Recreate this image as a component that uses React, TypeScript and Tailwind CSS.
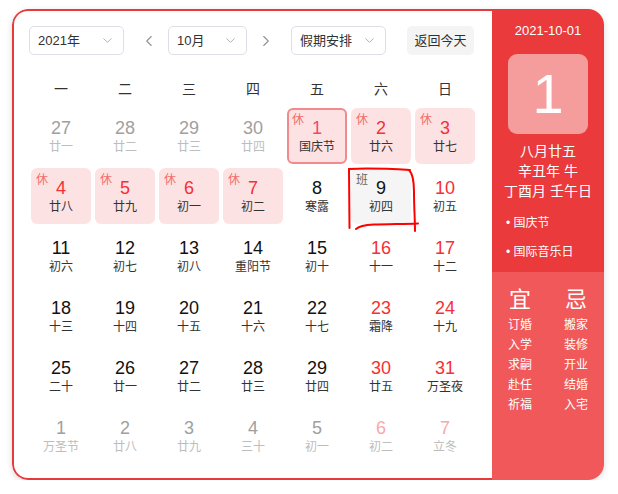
import { ChevronDown, ChevronLeft, ChevronRight } from "lucide-react";

type Cell = {
  day: number;
  lunar: string;
  kind: "prev" | "cur" | "next";
  red?: boolean;
  tag?: "休" | "班";
  selected?: boolean;
};

const cells: Cell[] = [
  { day: 27, lunar: "廿一", kind: "prev" },
  { day: 28, lunar: "廿二", kind: "prev" },
  { day: 29, lunar: "廿三", kind: "prev" },
  { day: 30, lunar: "廿四", kind: "prev" },
  { day: 1, lunar: "国庆节", kind: "cur", red: true, tag: "休", selected: true },
  { day: 2, lunar: "廿六", kind: "cur", red: true, tag: "休" },
  { day: 3, lunar: "廿七", kind: "cur", red: true, tag: "休" },
  { day: 4, lunar: "廿八", kind: "cur", red: true, tag: "休" },
  { day: 5, lunar: "廿九", kind: "cur", red: true, tag: "休" },
  { day: 6, lunar: "初一", kind: "cur", red: true, tag: "休" },
  { day: 7, lunar: "初二", kind: "cur", red: true, tag: "休" },
  { day: 8, lunar: "寒露", kind: "cur" },
  { day: 9, lunar: "初四", kind: "cur", tag: "班" },
  { day: 10, lunar: "初五", kind: "cur", red: true },
  { day: 11, lunar: "初六", kind: "cur" },
  { day: 12, lunar: "初七", kind: "cur" },
  { day: 13, lunar: "初八", kind: "cur" },
  { day: 14, lunar: "重阳节", kind: "cur" },
  { day: 15, lunar: "初十", kind: "cur" },
  { day: 16, lunar: "十一", kind: "cur", red: true },
  { day: 17, lunar: "十二", kind: "cur", red: true },
  { day: 18, lunar: "十三", kind: "cur" },
  { day: 19, lunar: "十四", kind: "cur" },
  { day: 20, lunar: "十五", kind: "cur" },
  { day: 21, lunar: "十六", kind: "cur" },
  { day: 22, lunar: "十七", kind: "cur" },
  { day: 23, lunar: "霜降", kind: "cur", red: true },
  { day: 24, lunar: "十九", kind: "cur", red: true },
  { day: 25, lunar: "二十", kind: "cur" },
  { day: 26, lunar: "廿一", kind: "cur" },
  { day: 27, lunar: "廿二", kind: "cur" },
  { day: 28, lunar: "廿三", kind: "cur" },
  { day: 29, lunar: "廿四", kind: "cur" },
  { day: 30, lunar: "廿五", kind: "cur", red: true },
  { day: 31, lunar: "万圣夜", kind: "cur", red: true },
  { day: 1, lunar: "万圣节", kind: "next" },
  { day: 2, lunar: "廿八", kind: "next" },
  { day: 3, lunar: "廿九", kind: "next" },
  { day: 4, lunar: "三十", kind: "next" },
  { day: 5, lunar: "初一", kind: "next" },
  { day: 6, lunar: "初二", kind: "next", red: true },
  { day: 7, lunar: "立冬", kind: "next", red: true },
];

const weekdays = ["一", "二", "三", "四", "五", "六", "日"];
const yi = ["订婚", "入学", "求嗣", "赴任", "祈福"];
const ji = ["搬家", "装修", "开业", "结婚", "入宅"];

function Select({ label, width }: { label: string; width: string }) {
  return (
    <div className={`${width} h-[29px] flex items-center justify-between pl-[8px] pr-[8px] border border-[#dcdfe6] rounded-[5px] text-[13px] text-[#303133]`}>
      <span>{label}</span>
      <ChevronDown size={15} strokeWidth={1.5} className="text-[#a8abb2]" />
    </div>
  );
}

function DayCell({ c }: { c: Cell }) {
  const off = c.kind !== "cur";
  let bg = "";
  if (c.tag === "休") bg = "bg-[#fde2e3]";
  if (c.tag === "班") bg = "bg-[#f5f5f5]";
  const border = c.selected ? "border-2 border-[#f08a8c]" : "border-2 border-transparent";
  let num = "text-[#111]";
  if (c.red) num = "text-[#f52f35]";
  if (c.selected) num = "text-[#f2486a]";
  if (off) num = c.red ? "text-[#f8a8aa]" : "text-[#a0a0a0]";
  const lunar = off ? "text-[#bdbdbd]" : "text-[#333]";
  return (
    <div className={`relative mx-[2px] h-[56px] rounded-[6px] ${bg} ${border} flex flex-col items-center pt-[7px]`}>
      {c.tag && (
        <span className={`absolute left-[3px] top-[3px] text-[12px] leading-[14px] ${c.tag === "休" ? "text-[#f26d6d]" : "text-[#666]"}`}>
          {c.tag}
        </span>
      )}
      <span className={`text-[18px] leading-[22px] ${num}`}>{c.day}</span>
      <span className={`text-[12px] leading-[16px] ${lunar}`}>{c.lunar}</span>
      {c.tag === "班" && (
        <svg className="absolute left-[-8px] top-[-6px] overflow-visible" width="74" height="68" viewBox="343 162 74 68" fill="none">
          <path d="M347 167 L347.5 226" stroke="#ff0000" strokeWidth="2" strokeLinecap="round" />
          <path d="M347 167 C368 166 390 167 408 168" stroke="#ff0000" strokeWidth="2" strokeLinecap="round" />
          <path d="M407 168 C411 172 412 180 412 190 C412 205 413 218 413 229" stroke="#ff0000" strokeWidth="2" strokeLinecap="round" />
          <path d="M354 227 C357 224 363 223 372 222.5 C386 222 402 222 416 221.5" stroke="#ff0000" strokeWidth="2" strokeLinecap="round" />
        </svg>
      )}
    </div>
  );
}

export default function App() {
  return (
    <div
      className="pl-[12px] pt-[9px]"
      style={{ fontFamily: '"Liberation Sans", "Noto Sans CJK SC", sans-serif' }}
    >
      <div className="w-[592px] h-[471px] flex rounded-[16px] overflow-hidden shadow-[0_2px_6px_rgba(0,0,0,0.15)]">
        <div className="w-[480px] border-l-2 border-t-2 border-b-2 border-[#e93a3b] rounded-l-[16px] bg-white pl-[15px] pt-[15px]">
          <div className="flex items-center">
            <Select label="2021年" width="w-[95px]" />
            <div className="ml-[15px] w-[20px] flex justify-center text-[#909399]">
              <ChevronLeft size={18} strokeWidth={1.5} />
            </div>
            <div className="ml-[9px]">
              <Select label="10月" width="w-[79px]" />
            </div>
            <div className="ml-[9px] w-[20px] flex justify-center text-[#909399]">
              <ChevronRight size={18} strokeWidth={1.5} />
            </div>
            <div className="ml-[15px]">
              <Select label="假期安排" width="w-[95px]" />
            </div>
            <div className="ml-[21px] w-[67px] h-[29px] rounded-[5px] bg-[#f4f4f5] flex items-center justify-center text-[13px] text-[#303133]">
              返回今天
            </div>
          </div>
          <div className="grid grid-cols-[repeat(7,64px)] mt-[21px] h-[26px] items-center text-[14px] text-[#333]">
            {weekdays.map((w) => (
              <div key={w} className="text-center">{w}</div>
            ))}
          </div>
          <div className="grid grid-cols-[repeat(7,64px)] gap-y-[4px] mt-[6px]">
            {cells.map((c, i) => (
              <DayCell key={i} c={c} />
            ))}
          </div>
        </div>
        <div className="w-[112px] flex flex-col text-white">
          <div className="h-[263px] bg-[#ea3a3b] flex flex-col items-center pt-[13px]">
            <div className="text-[13px] leading-[18px]">2021-10-01</div>
            <div className="mt-[14px] w-[80px] h-[80px] rounded-[9px] bg-[#f59c9c] flex items-center justify-center text-[56px] leading-none">
              1
            </div>
            <div className="mt-[7px] text-[14px] leading-[20px] text-center">
              <div>八月廿五</div>
              <div>辛丑年 牛</div>
              <div>丁酉月 壬午日</div>
            </div>
            <div className="self-start pl-[14px] text-[12px] leading-[16px]">
              <div className="mt-[14px]">• 国庆节</div>
              <div className="mt-[13px]">• 国际音乐日</div>
            </div>
          </div>
          <div className="flex-1 bg-[#f05859] grid grid-cols-2 pt-[16px]">
            <div className="flex flex-col items-center">
              <div className="text-[22px] leading-[24px] mb-[3px]">宜</div>
              {yi.map((t) => (
                <div key={t} className="text-[12px] leading-[20px]">{t}</div>
              ))}
            </div>
            <div className="flex flex-col items-center">
              <div className="text-[22px] leading-[24px] mb-[3px]">忌</div>
              {ji.map((t) => (
                <div key={t} className="text-[12px] leading-[20px]">{t}</div>
              ))}
            </div>
          </div>
        </div>
      </div>
    </div>
  );
}
